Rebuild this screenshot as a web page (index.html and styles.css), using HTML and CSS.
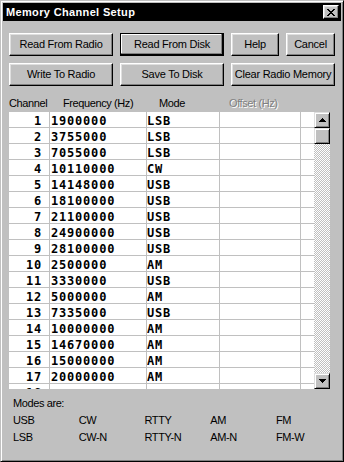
FILE: index.html
```html
<!DOCTYPE html>
<html>
<head>
<meta charset="utf-8">
<title>Memory Channel Setup</title>
<link rel="stylesheet" href="styles.css">
</head>
<body>
<div class="window">
  <div class="titlebar">
    <span class="title">Memory Channel Setup</span>
    <div class="close">
      <svg width="8" height="7" viewBox="0 0 8 7" shape-rendering="crispEdges"><path fill="#000" d="M0 0h2v1H0zM6 0h2v1H6zM1 1h2v1H1zM5 1h2v1H5zM2 2h4v1H2zM3 3h2v1H3zM2 4h4v1H2zM1 5h2v1H1zM5 5h2v1H5zM0 6h2v1H0zM6 6h2v1H6z"/></svg>
    </div>
  </div>
  <div class="content">
    <div class="buttons">
      <div class="btn">Read From Radio</div>
      <div class="btn default">Read From Disk</div>
      <div class="btn">Help</div>
      <div class="btn">Cancel</div>
      <div class="btn">Write To Radio</div>
      <div class="btn">Save To Disk</div>
      <div class="btn span2">Clear Radio Memory</div>
    </div>
    <div class="header">
      <span class="h-ch">Channel</span>
      <span class="h-fr">Frequency (Hz)</span>
      <span class="h-md">Mode</span>
      <span class="h-of">Offset (Hz)</span>
    </div>
    <div class="grid">
      <div class="rows">
        <div class="row"><div class="c ch">1</div><div class="c fr">1900000</div><div class="c md">LSB</div><div class="c of"></div><div class="c ex"></div></div>
        <div class="row"><div class="c ch">2</div><div class="c fr">3755000</div><div class="c md">LSB</div><div class="c of"></div><div class="c ex"></div></div>
        <div class="row"><div class="c ch">3</div><div class="c fr">7055000</div><div class="c md">LSB</div><div class="c of"></div><div class="c ex"></div></div>
        <div class="row"><div class="c ch">4</div><div class="c fr">10110000</div><div class="c md">CW</div><div class="c of"></div><div class="c ex"></div></div>
        <div class="row"><div class="c ch">5</div><div class="c fr">14148000</div><div class="c md">USB</div><div class="c of"></div><div class="c ex"></div></div>
        <div class="row"><div class="c ch">6</div><div class="c fr">18100000</div><div class="c md">USB</div><div class="c of"></div><div class="c ex"></div></div>
        <div class="row"><div class="c ch">7</div><div class="c fr">21100000</div><div class="c md">USB</div><div class="c of"></div><div class="c ex"></div></div>
        <div class="row"><div class="c ch">8</div><div class="c fr">24900000</div><div class="c md">USB</div><div class="c of"></div><div class="c ex"></div></div>
        <div class="row"><div class="c ch">9</div><div class="c fr">28100000</div><div class="c md">USB</div><div class="c of"></div><div class="c ex"></div></div>
        <div class="row"><div class="c ch">10</div><div class="c fr">2500000</div><div class="c md">AM</div><div class="c of"></div><div class="c ex"></div></div>
        <div class="row"><div class="c ch">11</div><div class="c fr">3330000</div><div class="c md">USB</div><div class="c of"></div><div class="c ex"></div></div>
        <div class="row"><div class="c ch">12</div><div class="c fr">5000000</div><div class="c md">AM</div><div class="c of"></div><div class="c ex"></div></div>
        <div class="row"><div class="c ch">13</div><div class="c fr">7335000</div><div class="c md">USB</div><div class="c of"></div><div class="c ex"></div></div>
        <div class="row"><div class="c ch">14</div><div class="c fr">10000000</div><div class="c md">AM</div><div class="c of"></div><div class="c ex"></div></div>
        <div class="row"><div class="c ch">15</div><div class="c fr">14670000</div><div class="c md">AM</div><div class="c of"></div><div class="c ex"></div></div>
        <div class="row"><div class="c ch">16</div><div class="c fr">15000000</div><div class="c md">AM</div><div class="c of"></div><div class="c ex"></div></div>
        <div class="row"><div class="c ch">17</div><div class="c fr">20000000</div><div class="c md">AM</div><div class="c of"></div><div class="c ex"></div></div>
        <div class="row"><div class="c ch">18</div><div class="c fr"></div><div class="c md"></div><div class="c of"></div><div class="c ex"></div></div>
      </div>
      <div class="scrollbar">
        <div class="sb-btn"><svg width="7" height="4" viewBox="0 0 7 4" shape-rendering="crispEdges"><path fill="#000" d="M3 0h1v1H3zM2 1h3v1H2zM1 2h5v1H1zM0 3h7v1H0z"/></svg></div>
        <div class="sb-btn thumb"></div>
        <div class="track"></div>
        <div class="sb-btn"><svg width="7" height="4" viewBox="0 0 7 4" shape-rendering="crispEdges"><path fill="#000" d="M0 0h7v1H0zM1 1h5v1H1zM2 2h3v1H2zM3 3h1v1H3z"/></svg></div>
      </div>
    </div>
    <div class="modes">
      <div class="modes-label">Modes are:</div>
      <div class="modes-grid">
        <span>USB</span><span>CW</span><span>RTTY</span><span>AM</span><span>FM</span>
        <span>LSB</span><span>CW-N</span><span>RTTY-N</span><span>AM-N</span><span>FM-W</span>
      </div>
    </div>
  </div>
</div>
</body>
</html>
```
FILE: styles.css
```css
* { box-sizing: border-box; }
html, body { margin: 0; padding: 0; }
body {
  width: 344px;
  height: 462px;
  background: #c0c0c0;
  font-family: "Liberation Sans", Arial, sans-serif;
  font-size: 11px;
  color: #000;
}
.window {
  width: 344px;
  height: 462px;
  background: #c0c0c0;
  border: 1px solid;
  border-color: #c0c0c0 #000 #000 #c0c0c0;
  box-shadow: inset 1px 1px #fff, inset -1px -1px #808080;
  padding: 2px;
  display: flex;
  flex-direction: column;
}
.titlebar {
  height: 18px;
  flex: none;
  background: #000;
  display: flex;
  align-items: center;
  justify-content: space-between;
  padding: 0 2px 0 3px;
}
.title {
  color: #fff;
  font-weight: bold;
  font-size: 11px;
  letter-spacing: 0.35px;
  line-height: 18px;
}
.close {
  width: 16px;
  height: 14px;
  background: #c0c0c0;
  border: 1px solid;
  border-color: #fff #000 #000 #fff;
  box-shadow: inset -1px -1px #808080, inset 1px 1px #dfdfdf;
  display: flex;
  align-items: center;
  justify-content: center;
}
.close svg { display: block; }
.content {
  padding: 12px 0 0 6px;
}
.buttons {
  display: grid;
  grid-template-columns: 104px 104px 48px 49px;
  column-gap: 7px;
  row-gap: 7px;
}
.btn {
  height: 23px;
  border: 1px solid;
  border-color: #fff #000 #000 #fff;
  box-shadow: inset -1px -1px #808080, inset 1px 1px #dfdfdf;
  line-height: 21px;
  text-align: center;
  letter-spacing: -0.25px;
  white-space: nowrap;
}
.btn.default {
  border-color: #000;
  box-shadow: inset -1px -1px #000, inset -2px -2px #808080, inset 1px 1px #fff;
}
.btn.span2 { grid-column: span 2; }
.header {
  height: 26px;
  padding-top: 11px;
  line-height: 13px;
  display: flex;
  white-space: nowrap;
  letter-spacing: -0.4px;
}
.h-ch { width: 41px; }
.h-fr { width: 97px; padding-left: 13px; }
.h-md { width: 73px; padding-left: 12px; }
.h-of { padding-left: 9px; color: #808080; text-shadow: 1px 1px #fff; }
.grid {
  width: 321px;
  height: 277px;
  display: flex;
  background: #fff;
}
.rows {
  width: 305px;
  overflow: hidden;
}
.row {
  display: flex;
  height: 16px;
}
.c {
  height: 16px;
  border-right: 1px solid #c0c0c0;
  border-bottom: 1px solid #c0c0c0;
  font-family: "DejaVu Sans Mono", "Liberation Mono", monospace;
  font-weight: bold;
  font-size: 12px;
  letter-spacing: 0.8px;
  padding-top: 3px;
  line-height: 12px;
  white-space: nowrap;
  overflow: hidden;
}
.ch { width: 41px; text-align: right; padding-right: 7px; }
.fr { width: 97px; padding-left: 1px; }
.md { width: 73px; }
.of { width: 81px; }
.ex { width: 13px; border-right: none; }
.scrollbar {
  width: 16px;
  display: flex;
  flex-direction: column;
}
.sb-btn {
  width: 16px;
  height: 16px;
  flex: none;
  background: #c0c0c0;
  border: 1px solid;
  border-color: #dfdfdf #000 #000 #dfdfdf;
  box-shadow: inset 1px 1px #fff, inset -1px -1px #808080;
  display: flex;
  align-items: center;
  justify-content: center;
}
.sb-btn svg { display: block; }
.track {
  flex: 1;
  background: repeating-conic-gradient(#c0c0c0 0 25%, #fff 0 50%) 0 0 / 2px 2px;
}
.modes {
  margin-top: 6px;
  padding-left: 4px;
  line-height: 17px;
  letter-spacing: -0.4px;
}
.modes-grid {
  display: grid;
  grid-template-columns: repeat(5, 65.75px);
}
```
